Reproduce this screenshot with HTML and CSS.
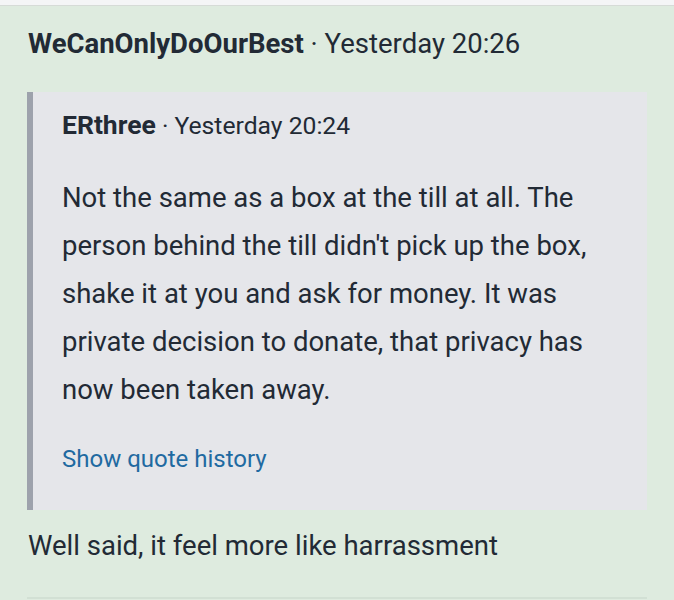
FILE: index.html
```html
<!DOCTYPE html>
<html>
<head>
<meta charset="utf-8">
<link rel="stylesheet" href="styles.css">
</head>
<body>
<div class="topbar"></div>
<div class="post">
  <div class="meta"><span class="author">WeCanOnlyDoOurBest</span> · Yesterday 20:26</div>
  <blockquote class="quote">
    <div class="qmeta"><span class="qauthor">ERthree</span> · Yesterday 20:24</div>
    <p class="qbody">Not the same as a box at the till at all. The person behind the till didn't pick up the box, shake it at you and ask for money. It was private decision to donate, that privacy has now been taken away.</p>
    <a class="history" href="#">Show quote history</a>
  </blockquote>
  <p class="reply">Well said, it feel more like harrassment</p>
</div>
</body>
</html>
```
FILE: styles.css
```css
html, body {
  margin: 0;
  padding: 0;
  background: #deebdf;
  font-family: Roboto, "Noto Sans", sans-serif;
  color: #222a35;
}
.topbar {
  height: 5px;
  background: #f4f5f6;
  border-bottom: 1px solid #d6dbd7;
}
.post {
  margin: 0 27px;
  padding-top: 21.6px;
  border-bottom: 2px solid #d2e0d4;
  height: 593px;
  box-sizing: border-box;
}
.meta {
  font-size: 27.5px;
  line-height: 32px;
  margin-left: 1px;
}
.author {
  font-weight: 700;
}
.quote {
  margin: 32.4px 0 0 0;
  background: #e5e6ea;
  border-left: 6px solid #9da2ac;
  padding: 17.5px 37px 0 29px;
  height: 418px;
  box-sizing: border-box;
}
.qmeta {
  font-size: 24.7px;
  line-height: 32px;
}
.qauthor {
  font-size: 26.5px;
  font-weight: 700;
}
.qbody {
  margin: 32px 0 0 0;
  font-size: 27.5px;
  line-height: 48px;
}
.history {
  display: block;
  margin-top: 29px;
  font-size: 24px;
  line-height: 32px;
  color: #1f6aa1;
  text-decoration: none;
}
.reply {
  margin: 19.6px 0 0 1px;
  font-size: 27.5px;
  line-height: 32px;
}
```
